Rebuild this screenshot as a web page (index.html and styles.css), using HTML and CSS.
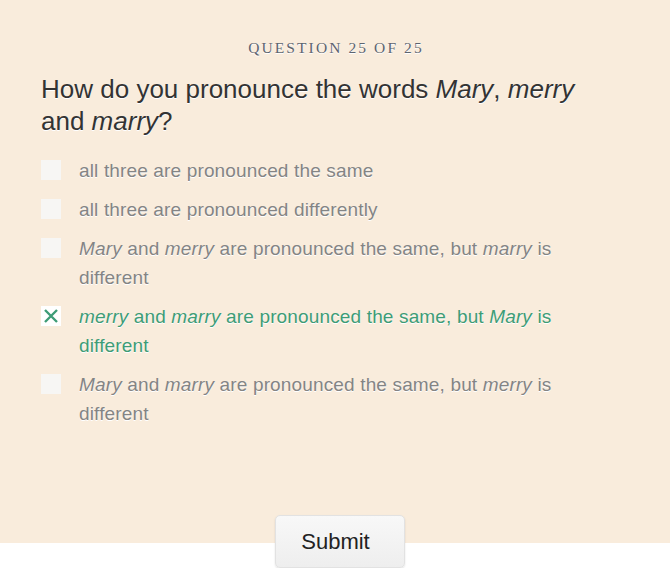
FILE: index.html
```html
<!DOCTYPE html>
<html>
<head>
<meta charset="utf-8">
<link rel="stylesheet" href="styles.css">
</head>
<body>
<div class="panel">
  <div class="quiz">
    <div class="counter">QUESTION 25 OF 25</div>
    <h1 class="question">How do you pronounce the words <em>Mary</em>, <em>merry</em> and <em>marry</em>?</h1>
    <ul class="options">
      <li class="option"><span class="box"></span><span class="label">all three are pronounced the same</span></li>
      <li class="option"><span class="box"></span><span class="label">all three are pronounced differently</span></li>
      <li class="option"><span class="box"></span><span class="label"><em>Mary</em> and <em>merry</em> are pronounced the same, but <em>marry</em> is different</span></li>
      <li class="option selected"><span class="box"><svg viewBox="0 0 20 20" width="20" height="20"><path d="M4 4 L16 16 M16 4 L4 16" stroke="#3e9c76" stroke-width="2.4" fill="none"/></svg></span><span class="label"><em>merry</em> and <em>marry</em> are pronounced the same, but <em>Mary</em> is different</span></li>
      <li class="option"><span class="box"></span><span class="label"><em>Mary</em> and <em>marry</em> are pronounced the same, but <em>merry</em> is different</span></li>
    </ul>
  </div>
</div>
<div class="actions">
  <button class="submit">Submit</button>
</div>
</body>
</html>
```

FILE: styles.css
```css
html, body {
  margin: 0;
  padding: 0;
  background: #ffffff;
}
body {
  font-family: "Liberation Sans", Arial, sans-serif;
}
.panel {
  background: #f9ecdc;
  height: 543px;
  margin-right: 2px;
  padding-top: 38px;
  box-sizing: border-box;
}
.quiz {
  margin-left: 41px;
  width: 580px;
}
.counter {
  font-family: "Liberation Serif", "Times New Roman", serif;
  font-size: 15.5px;
  letter-spacing: 2.1px;
  color: #5d6470;
  text-align: center;
  text-shadow: 0 1px 0 #fff;
  line-height: 20px;
  padding-left: 10px;
}
.question {
  margin: 15px 0 0 0;
  font-weight: normal;
  font-size: 26px;
  line-height: 32px;
  color: #333333;
  text-shadow: 0 1px 0 #fff;
}
.question em {
  font-style: italic;
}
.options {
  list-style: none;
  margin: 19px 0 0 0;
  padding: 0;
  display: flex;
  flex-direction: column;
  gap: 10px;
}
.option {
  display: flex;
  align-items: flex-start;
  font-size: 19px;
  letter-spacing: 0.15px;
  line-height: 29px;
  color: #848484;
  text-shadow: 0 1px 0 #fff;
}
.box {
  flex: none;
  width: 20px;
  height: 20px;
  background: #f7f6f4;
  margin-top: 4px;
  margin-right: 18px;
  display: flex;
}
.label {
  max-width: 500px;
}
.selected {
  color: #3e9c76;
}
.selected .box {
  background: #ffffff;
}
.actions {
  display: flex;
  justify-content: center;
  margin-top: -28px;
  padding-left: 7px;
}
.submit {
  width: 130px;
  height: 53px;
  border: 1px solid #e2e2e2;
  border-radius: 5px;
  background: linear-gradient(#f8f8f8, #eeeeee);
  font-family: "Liberation Sans", Arial, sans-serif;
  font-size: 22px;
  color: #222;
  box-shadow: 0 1px 2px rgba(0,0,0,0.12);
  padding: 0 8px 0 0;
}
```
